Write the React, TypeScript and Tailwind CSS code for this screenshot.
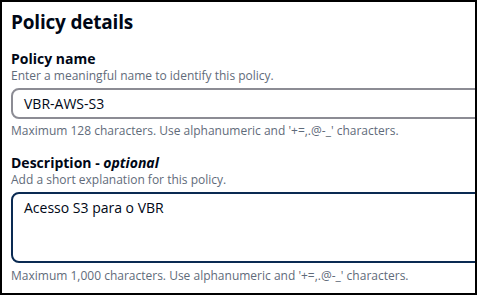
export default function App() {
  return (
    <div
      className="h-[295px] w-[477px] overflow-hidden border-2 border-black bg-white"
      style={{ fontFamily: '"Open Sans", "Noto Sans", Arial, sans-serif' }}
    >
      <div className="w-[520px] pl-[9px] pt-[6px]">
        <h2 className="text-[19px] font-bold leading-[28px] tracking-[-0.2px] text-[#000716]">Policy details</h2>

        <div className="mt-[14px] text-[14px] font-bold leading-[18px] text-[#000716]">Policy name</div>
        <div className="text-[12px] leading-[16px] text-[#5f6b7a]">
          Enter a meaningful name to identify this policy.
        </div>
        <div className="mt-[4px] flex h-[31px] items-center rounded-[8px] border-2 border-[#8c8c94] pl-[11px] text-[14px] text-[#000716]">
          VBR-AWS-S3
        </div>
        <div className="mt-[4px] text-[12px] leading-[16px] text-[#5f6b7a]">
          Maximum 128 characters. Use alphanumeric and '+=,.@-_' characters.
        </div>

        <div className="mt-[15px] text-[14px] font-bold leading-[18px] text-[#000716]">
          Description - <i>optional</i>
        </div>
        <div className="text-[12px] leading-[16px] text-[#5f6b7a]">
          Add a short explanation for this policy.
        </div>
        <div className="mt-[4px] h-[71px] rounded-[8px] border-2 border-[#0a2a52] pl-[11px] pt-[4px] text-[14px] leading-[20px] text-[#000716]">
          Acesso S3 para o VBR
        </div>
        <div className="mt-[5px] text-[12px] leading-[16px] text-[#5f6b7a]">
          Maximum 1,000 characters. Use alphanumeric and '+=,.@-_' characters.
        </div>
      </div>
    </div>
  );
}
